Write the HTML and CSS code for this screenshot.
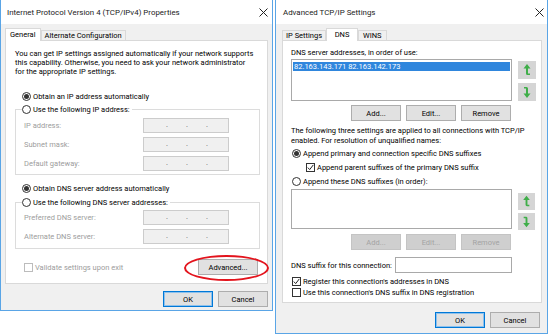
FILE: index.html
```html
<!DOCTYPE html>
<html lang="en">

<head>
    <meta charset="UTF-8" />
    <title>TCP/IPv4 Properties</title>
    <link rel="stylesheet" href="styles.css">
</head>

<body>
    <div class="desk">
        <!-- left dialog -->
        <div class="win win-ipv4">
            <div class="titlebar">
                <span class="title">Internet Protocol Version 4 (TCP/IPv4) Properties</span>
                <svg class="close" width="9" height="9" viewBox="0 0 9 9"><path d="M0.5 0.5 L8.5 8.5 M8.5 0.5 L0.5 8.5" /></svg>
            </div>
            <div class="body">
                <div class="tabs">
                    <div class="tab active">General</div>
                    <div class="tab">Alternate Configuration</div>
                </div>
                <div class="panel panel-general">
                    <p class="intro">You can get IP settings assigned automatically if your network supports<br>this capability. Otherwise, you need to ask your network administrator<br>for the appropriate IP settings.</p>
                    <div class="opt opt-auto-ip"><span class="radio on"></span>Obtain an IP address automatically</div>
                    <div class="group group-ip">
                        <div class="legend"><span class="radio"></span>Use the following IP address:</div>
                        <div class="field"><span class="field-label">IP address:</span><span class="ipbox"><i>.</i><i>.</i><i>.</i></span></div>
                        <div class="field"><span class="field-label">Subnet mask:</span><span class="ipbox"><i>.</i><i>.</i><i>.</i></span></div>
                        <div class="field"><span class="field-label">Default gateway:</span><span class="ipbox"><i>.</i><i>.</i><i>.</i></span></div>
                    </div>
                    <div class="opt opt-auto-dns"><span class="radio on"></span>Obtain DNS server address automatically</div>
                    <div class="group group-dns">
                        <div class="legend"><span class="radio"></span>Use the following DNS server addresses:</div>
                        <div class="field"><span class="field-label">Preferred DNS server:</span><span class="ipbox"><i>.</i><i>.</i><i>.</i></span></div>
                        <div class="field"><span class="field-label">Alternate DNS server:</span><span class="ipbox"><i>.</i><i>.</i><i>.</i></span></div>
                    </div>
                    <div class="foot">
                        <div class="opt disabled"><span class="check"></span>Validate settings upon exit</div>
                        <div class="adv-wrap">
                            <button class="btn btn-adv">Advanced...</button>
                            <span class="ring"></span>
                        </div>
                    </div>
                </div>
                <div class="actions">
                    <button class="btn default">OK</button>
                    <button class="btn">Cancel</button>
                </div>
            </div>
        </div>

        <!-- right dialog -->
        <div class="win win-adv">
            <div class="titlebar">
                <span class="title">Advanced TCP/IP Settings</span>
                <svg class="close" width="9" height="9" viewBox="0 0 9 9"><path d="M0.5 0.5 L8.5 8.5 M8.5 0.5 L0.5 8.5" /></svg>
            </div>
            <div class="body">
                <div class="tabs">
                    <div class="tab">IP Settings</div>
                    <div class="tab active tab-dns">DNS</div>
                    <div class="tab tab-wins">WINS</div>
                </div>
                <div class="panel panel-dns">
                    <div class="caption">DNS server addresses, in order of use:</div>
                    <div class="list-row">
                        <div class="listbox"><div class="item sel">82.163.143.171 82.163.142.173</div></div>
                        <div class="movers">
                            <span class="mover"><svg width="18" height="18" viewBox="0 0 18 18"><path d="M9 3 L5.5 7.5 H8 V12.5 Q8 14 9.5 14 H12 V12.5 H10 V7.5 H12.5 Z" /></svg></span>
                            <span class="mover"><svg width="18" height="18" viewBox="0 0 18 18"><path d="M9 15 L12.5 10.5 H10 V5.5 Q10 4 8.5 4 H6 V5.5 H8 V10.5 H5.5 Z" /></svg></span>
                        </div>
                    </div>
                    <div class="btn-row">
                        <button class="btn">Add...</button>
                        <button class="btn">Edit...</button>
                        <button class="btn">Remove</button>
                    </div>
                    <p class="note">The following three settings are applied to all connections with TCP/IP<br>enabled. For resolution of unqualified names:</p>
                    <div class="opt opt-primary"><span class="radio on"></span>Append primary and connection specific DNS suffixes</div>
                    <div class="opt opt-parent"><span class="check"><svg width="7" height="7" viewBox="0 0 7 7"><path d="M0.8 3.6 L2.7 5.6 L6.3 0.9" /></svg></span>Append parent suffixes of the primary DNS suffix</div>
                    <div class="opt opt-these"><span class="radio"></span>Append these DNS suffixes (in order):</div>
                    <div class="list-row list-row-suffix">
                        <div class="listbox"></div>
                        <div class="movers">
                            <span class="mover"><svg width="17" height="17" viewBox="0 0 18 18"><path d="M9 3 L5.5 7.5 H8 V12.5 Q8 14 9.5 14 H12 V12.5 H10 V7.5 H12.5 Z" /></svg></span>
                            <span class="mover"><svg width="17" height="17" viewBox="0 0 18 18"><path d="M9 15 L12.5 10.5 H10 V5.5 Q10 4 8.5 4 H6 V5.5 H8 V10.5 H5.5 Z" /></svg></span>
                        </div>
                    </div>
                    <div class="btn-row btn-row-off">
                        <button class="btn" disabled>Add...</button>
                        <button class="btn" disabled>Edit...</button>
                        <button class="btn" disabled>Remove</button>
                    </div>
                    <div class="suffix-row">
                        <span class="suffix-label">DNS suffix for this connection:</span>
                        <span class="textbox"></span>
                    </div>
                    <div class="opt opt-reg"><span class="check"><svg width="7" height="7" viewBox="0 0 7 7"><path d="M0.8 3.6 L2.7 5.6 L6.3 0.9" /></svg></span>Register this connection's addresses in DNS</div>
                    <div class="opt opt-use"><span class="check"></span>Use this connection's DNS suffix in DNS registration</div>
                </div>
                <div class="actions">
                    <button class="btn default">OK</button>
                    <button class="btn">Cancel</button>
                </div>
            </div>
        </div>
    </div>
</body>

</html>
```

FILE: styles.css
```css
* {
    margin: 0;
    padding: 0;
    box-sizing: border-box;
}

body {
    background: #fff;
    color: #000;
    font-family: Roboto, "Noto Sans", sans-serif;
    font-size: 7.5px;
}

.desk {
    display: flex;
    align-items: flex-start;
    gap: 2px;
}

/* window frame */
.win {
    display: flex;
    flex-direction: column;
    background: #f0f0f0;
    border: 1px solid #5aa5e6;
    border-top: none;
}

.win-ipv4 {
    width: 273px;
    height: 311px;
}

.win-adv {
    width: 273px;
    height: 334px;
}

.titlebar {
    height: 24px;
    background: #fff;
    display: flex;
    align-items: center;
    justify-content: space-between;
    font-size: 7.9px;
    color: #1a1a1a;
}

.win-ipv4 .titlebar {
    padding: 0 4px 0 6px;
}

.win-adv .titlebar {
    padding: 0 3px 0 7px;
}

.close path {
    stroke: #222;
    stroke-width: 1;
    fill: none;
}

.body {
    padding-top: 4px;
}

.win-ipv4 .body {
    padding-left: 4px;
    padding-right: 4px;
}

.win-adv .body {
    padding-left: 6px;
    padding-right: 5px;
}

/* tabs */
.tabs {
    display: flex;
    height: 12px;
}

.tab {
    height: 10px;
    margin-top: 2px;
    padding: 0 3px;
    line-height: 9px;
    background: #f0f0f0;
    border: 1px solid #d9d9d9;
    border-bottom: none;
    white-space: nowrap;
}

.tab.active {
    position: relative;
    z-index: 1;
    height: 13px;
    margin-top: 0;
    padding: 0 4px;
    line-height: 11px;
    background: #fff;
}

.tab-dns {
    min-width: 32px;
    text-align: center;
}

.tab-wins {
    padding: 0 4px;
}

.panel {
    position: relative;
    background: #fff;
    border: 1px solid #d9d9d9;
}

/* radios & checks */
.opt,
.legend {
    display: flex;
    align-items: center;
    height: 12px;
    white-space: nowrap;
}

.radio {
    width: 9px;
    height: 9px;
    margin-right: 2px;
    border: 1px solid #333;
    border-radius: 50%;
    background: #fff;
    display: flex;
    align-items: center;
    justify-content: center;
}

.radio.on::after {
    content: "";
    width: 5px;
    height: 5px;
    border-radius: 50%;
    background: #333;
}

.check {
    width: 9px;
    height: 9px;
    margin-right: 2px;
    border: 1px solid #333;
    background: #fff;
    display: flex;
    align-items: center;
    justify-content: center;
}

.check path {
    stroke: #222;
    stroke-width: 1;
    fill: none;
}

.disabled {
    color: #9d9d9d;
}

.disabled .check {
    border-color: #bcbcbc;
}

/* buttons */
.btn {
    height: 16px;
    width: 50px;
    font: inherit;
    color: #000;
    background: #e1e1e1;
    border: 1px solid #adadad;
}

.btn.default {
    border-color: #0078d7;
    box-shadow: inset 0 0 0 1px #8ec1ec;
}

.btn:disabled {
    color: #a3a3a3;
    background: #cfcfcf;
    border-color: #c4c4c4;
}

.actions {
    display: flex;
    justify-content: flex-end;
    gap: 5px;
}

.win-ipv4 .actions {
    margin-top: 7px;
}

.win-adv .actions {
    margin-top: 9px;
    padding-right: 2px;
}

/* general tab */
.panel-general {
    height: 244px;
    padding-top: 8px;
}

.intro {
    margin-left: 9px;
    line-height: 9px;
    white-space: nowrap;
}

.opt-auto-ip {
    margin: 14px 0 0 16px;
}

.group {
    width: 245px;
    margin-left: 9px;
    border: 1px solid #dcdcdc;
}

.group-ip {
    margin-top: 7px;
    padding-bottom: 3px;
}

.group .legend {
    width: fit-content;
    margin: -7px 0 0 6px;
    padding-right: 2px;
    background: #fff;
}

.field {
    display: flex;
    align-items: center;
    height: 15px;
    margin-top: 4px;
    padding-left: 8px;
    color: #9d9d9d;
}

.legend + .field {
    margin-top: 3px;
}

.group-dns .legend + .field {
    margin-top: 2px;
}

.field-label {
    width: 119px;
}

.ipbox {
    width: 86px;
    height: 15px;
    display: flex;
    align-items: flex-end;
    padding: 0 0 3px 22px;
    gap: 18px;
    background: #f0f0f0;
    border: 1px solid #cccccc;
    color: #555;
    line-height: 8px;
}

.ipbox i {
    font-style: normal;
}

.opt-auto-dns {
    margin: 7px 0 0 16px;
}

.group-dns {
    margin-top: 8px;
    padding-bottom: 4px;
}

.foot {
    display: flex;
    align-items: center;
    justify-content: space-between;
    height: 16px;
    margin-top: 10px;
    padding: 0 9px 0 18px;
}

.adv-wrap {
    position: relative;
}

.btn-adv {
    width: 60px;
}

.ring {
    position: absolute;
    left: -14px;
    top: -4px;
    width: 85px;
    height: 26px;
    border: 2px solid #e3141d;
    border-radius: 50%;
}

/* dns tab */
.panel-dns {
    height: 263px;
    padding: 6px 0 0 8px;
}

.caption {
    height: 12px;
    line-height: 12px;
}

.list-row {
    display: flex;
    align-items: flex-start;
    height: 42px;
}

.listbox {
    width: 221px;
    height: 42px;
    padding: 2px 1px;
    border: 1px solid #a9a9a9;
    background: #fff;
}

.item {
    height: 9px;
    line-height: 9px;
    padding-left: 1px;
}

.item.sel {
    background: #2f86dd;
    color: #fff;
}

.movers {
    display: flex;
    flex-direction: column;
    gap: 4px;
    margin-left: 6px;
    padding-top: 2px;
}

.mover {
    display: block;
    width: 18px;
    height: 18px;
    background: #d5d5d5;
}

.mover svg {
    display: block;
}

.mover path {
    fill: #3fae49;
}

.list-row-suffix {
    height: 40px;
    margin-top: 2px;
}

.list-row-suffix .listbox {
    height: 40px;
}

.list-row-suffix .movers {
    gap: 3px;
    padding-top: 4px;
}

.list-row-suffix .mover {
    width: 17px;
    height: 17px;
}

.btn-row {
    display: flex;
    justify-content: flex-end;
    gap: 5px;
    width: 220px;
    margin-top: 4px;
}

.btn-row-off {
    margin-top: 5px;
}

.note {
    margin-top: 5px;
    line-height: 10px;
    white-space: nowrap;
}

.opt-primary {
    margin: 1px 0 0 1px;
}

.opt-parent {
    margin: 2px 0 0 15px;
}

.opt-these {
    margin: 2px 0 0 1px;
}

.suffix-row {
    display: flex;
    align-items: center;
    justify-content: space-between;
    width: 221px;
    height: 16px;
    margin-top: 7px;
}

.textbox {
    width: 117px;
    height: 16px;
    border: 1px solid #a9a9a9;
    background: #fff;
}

.opt-reg {
    height: 11px;
    margin: 3px 0 0 1px;
}

.opt-use {
    height: 11px;
    margin-left: 1px;
}
```
